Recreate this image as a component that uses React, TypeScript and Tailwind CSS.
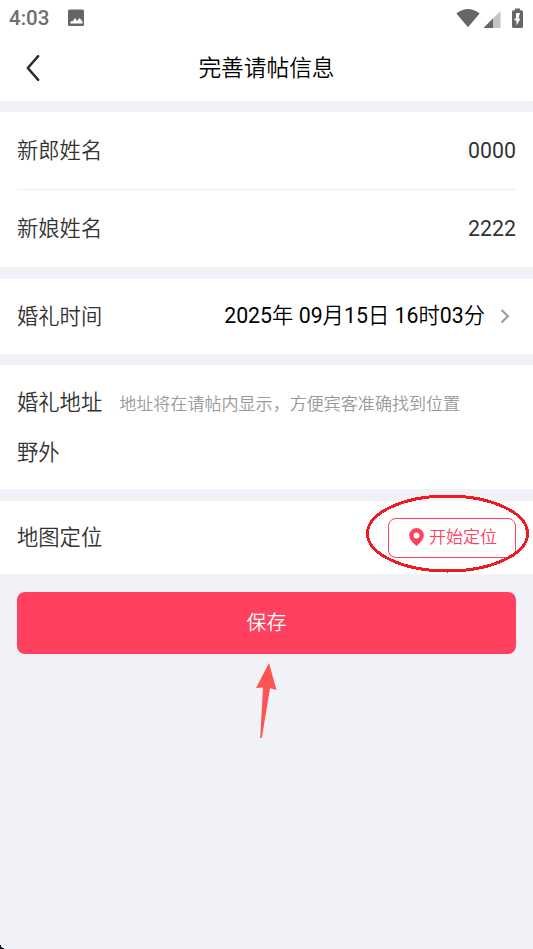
import type { ReactNode } from "react";

function StatusBar() {
  return (
    <div className="flex h-9 items-center justify-between pr-[9px] pl-[9px] text-[#666]">
      <div className="flex items-center">
        <span className="w-[58px] pt-px text-[20.500px] leading-none font-medium text-[#6e6e6e]">
          4:03
        </span>
        <svg className="h-[18px] w-[18px]" viewBox="0 0 18 18">
          <path
            fill="currentColor"
            fillRule="evenodd"
            d="M2.500.5h13q1.500 0 1.500 1.500v13.500q0 1.500-1.500 1.500h-13q-1.500 0-1.500-1.500V2Q1 .5 2.500.5ZM3 14.500h12.500v-2l-3-3.500-2.500 3L8 9l-2.500 3.500L4.500 12 3 14Z"
          />
        </svg>
      </div>
      <svg className="h-[22px] w-[68px]" viewBox="456 6 68 22">
        <path
          fill="currentColor"
          d="M468 26.300 457 13.200q-.6-.8.2-1.500 10.800-7.600 21.600 0 .8.7.2 1.500Z"
        />
        <path fill="#c4c4c4" d="M500.500 10v17H483.500Z" />
        <path fill="currentColor" d="M493 17.500V27h-9.500Z" />
        <path
          fill="currentColor"
          fillRule="evenodd"
          d="M515 7.500h5v1.800h1.500q1.500 0 1.500 1.500V25.500q0 1.500-1.500 1.500h-8q-1.500 0-1.500-1.500V10.800q0-1.500 1.500-1.500h1.500ZM516 12v5.500h-1.500v2h2v5l4-7h-2l1.500-5.500Z"
        />
      </svg>
    </div>
  );
}

function Label({ children }: { children: ReactNode }) {
  return (
    <span className="text-[21.300px] leading-8 text-[#333]">{children}</span>
  );
}

function NameRow({ label, value }: { label: string; value: string }) {
  return (
    <div className="flex h-[77px] items-center justify-between">
      <Label>{label}</Label>
      <span className="text-[21.300px] font-normal text-[#333]">{value}</span>
    </div>
  );
}

// Digits are set a touch heavier than the Chinese units between them
function DateText({ value }: { value: string }) {
  return (
    <span className="ml-auto pb-px text-[21.300px] text-black">
      {value.split(/([年月日时分])/).map((part, i) => (
        <span key={i} className={i % 2 ? "font-[350]" : "font-normal"}>
          {part}
        </span>
      ))}
    </span>
  );
}

export default function App() {
  return (
    <div
      lang="zh-CN"
      className="relative h-[949px] w-[533px] overflow-hidden bg-[#f1f2f7] font-[Roboto,'Noto_Sans_CJK_SC',sans-serif] font-[350]"
    >
      <header className="h-[101px] bg-white">
        <StatusBar />
        <div className="grid h-[65px] grid-cols-[60px_1fr_60px] items-center">
          <button className="pb-px pl-[25px]" aria-label="返回">
            <svg
              className="h-7 w-4"
              viewBox="0 0 16 28"
              fill="none"
              stroke="#2b2b2b"
              strokeWidth="2.500"
              strokeLinecap="round"
              strokeLinejoin="round"
            >
              <path d="M13.200 2.200 2.800 14l10.400 11.800" />
            </svg>
          </button>
          <h1 className="pt-0.5 text-center text-[22.700px] font-[350] text-black">
            完善请帖信息
          </h1>
        </div>
      </header>

      <section className="mt-[11px] h-[155px] bg-white px-[17px]">
        <NameRow label="新郎姓名" value="0000" />
        <div className="h-px bg-[#eeeeef]" />
        <NameRow label="新娘姓名" value="2222" />
      </section>

      <section className="mt-3 flex h-[75px] items-center bg-white px-[17px]">
        <Label>婚礼时间</Label>
        <DateText value="2025年 09月15日 16时03分" />
        <svg
          className="mr-[5px] mb-0.5 ml-[15px] h-4 w-[11px]"
          viewBox="0 0 11 16"
          fill="none"
          stroke="#999"
          strokeWidth="2"
        >
          <path d="m1.500 2 6.500 6.300-6.500 6.200" />
        </svg>
      </section>

      <section className="mt-[11px] h-[124px] bg-white px-[17px] pt-[21px]">
        <div className="flex items-center">
          <Label>婚礼地址</Label>
          <span className="ml-[17px] pt-0.5 text-[17.060px] leading-8 text-[#999]">
            地址将在请帖内显示，方便宾客准确找到位置
          </span>
        </div>
        <p className="mt-[17px] text-[21.300px] leading-8 text-[#333]">野外</p>
      </section>

      <section className="mt-3 flex h-[73px] items-center justify-between bg-white px-[17px]">
        <Label>地图定位</Label>
        <button className="flex h-10 w-32 items-center justify-center gap-[5px] rounded-lg border border-[#ff405f] pl-0.5 text-[17.060px] text-[#ff405f]">
          <svg className="mb-0.5 h-[18px] w-[15px]" viewBox="0 0 15 18">
            <path
              fill="currentColor"
              fillRule="evenodd"
              d="M7.500 0A7.300 7.300 0 0 0 .2 7.300C.2 11.800 5 15.600 7.500 18c2.500-2.400 7.300-6.200 7.300-10.700A7.300 7.300 0 0 0 7.500 0Zm0 4.500a3 3 0 1 1 0 6 3 3 0 0 1 0-6Z"
            />
          </svg>
          开始定位
        </button>
      </section>

      <div className="px-[17px] pt-[18px]">
        <button className="h-[62px] w-full rounded-lg bg-[#ff405f] pt-0.5 text-[19.900px] text-white">
          保存
        </button>
      </div>

      {/* Hand-drawn hints over the page */}
      <svg
        className="pointer-events-none absolute inset-0 h-[949px] w-[533px]"
        viewBox="0 0 533 949"
      >
        <ellipse
          cx="447.500"
          cy="533.500"
          rx="80"
          ry="37.500"
          fill="none"
          stroke="#ed1c24"
          strokeWidth="3"
          shapeRendering="crispEdges"
        />
        <path
          fill="#ff5353"
          d="m269 663 7.500 27-6.500-1.800L261.800 738h-1.600L263 687.500l-7 .5Z"
        />
        <path fill="#10131a" d="M0 945h1v2h1v1h2v1H0Z" />
      </svg>
    </div>
  );
}
